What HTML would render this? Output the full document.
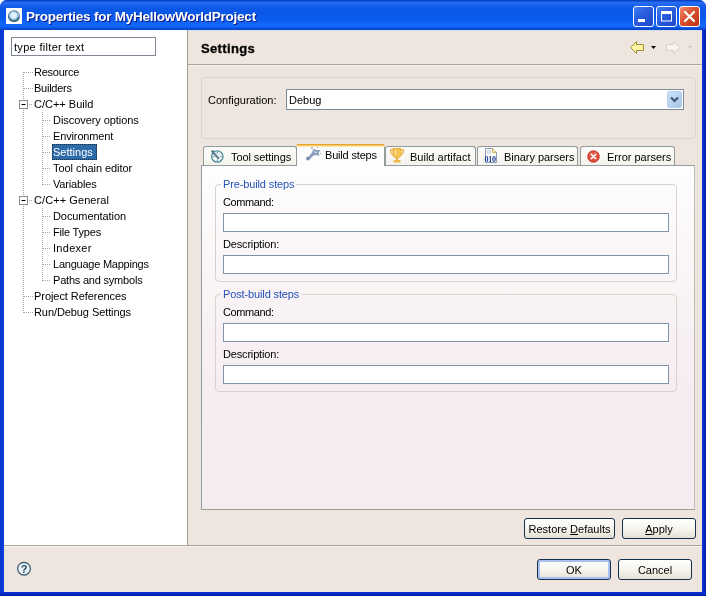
<!DOCTYPE html>
<html>
<head>
<meta charset="utf-8">
<title>Properties for MyHellowWorldProject</title>
<style>
html,body{margin:0;padding:0;background:#fff;}
body{width:706px;height:596px;overflow:hidden;position:relative;font:11px "Liberation Sans",sans-serif;color:#000;}
#win{position:absolute;left:0;top:0;width:706px;height:596px;background:#0a34d6;will-change:transform;border-radius:7px 7px 0 0;overflow:hidden;}
#titlebar{position:absolute;left:0;top:0;width:706px;height:30px;
 background:linear-gradient(to bottom,#0838b4 0%,#0f52dc 4%,#2a6ef2 9%,#1c64ee 16%,#0c58e6 26%,#0a58e8 45%,#0b5cee 65%,#1066f8 80%,#1268fa 88%,#0a52e0 94%,#0840c0 100%);}
#titletext{position:absolute;left:26px;top:9px;font:bold 13.5px "Liberation Sans",sans-serif;letter-spacing:-0.24px;color:#fff;white-space:nowrap;text-shadow:1px 1px 0 #0a1883;}
#appicon{position:absolute;left:6px;top:8px;width:16px;height:16px;}
.tb{position:absolute;top:6px;width:21px;height:21px;box-sizing:border-box;border:1px solid #fff;border-radius:3px;
 background:linear-gradient(135deg,#3f7ff0 0%,#2a5fe0 40%,#1c47c8 100%);}
#bclose{background:linear-gradient(135deg,#ec8c6c 0%,#d9502f 45%,#b93315 100%);}
#client{position:absolute;left:4px;top:30px;width:698px;height:562px;background:#eee6de;box-shadow:inset 0 1px 0 #d6dff0;}
#bl{position:absolute;left:0;top:30px;width:4px;height:566px;background:linear-gradient(to right,#0830c6,#0a3cd8 45%,#0a40dc);}
#br{position:absolute;left:702px;top:30px;width:4px;height:566px;background:linear-gradient(to right,#0a34d6,#0828c4 50%,#001a9c);}
#bb{position:absolute;left:0;top:592px;width:706px;height:4px;background:linear-gradient(to bottom,#0a34d6,#0828c4 50%,#001a9c);}
#tree{position:absolute;left:0;top:0;width:183px;height:515px;background:#fff;}
#vsep{position:absolute;left:183px;top:0;width:1px;height:515px;background:#9d9d92;}
#hsep{position:absolute;left:0;top:515px;width:698px;height:1px;background:#a7a396;}
#hsep2{position:absolute;left:0;top:516px;width:698px;height:1px;background:#fbf8f3;}
#filter{position:absolute;left:7px;top:7px;width:145px;height:19px;box-sizing:border-box;border:1px solid #7e8896;background:#fff;padding:3px 0 0 2px;white-space:nowrap;letter-spacing:0.31px;}
.ti{position:absolute;height:16px;line-height:17px;white-space:nowrap;}
.sel{background:#2d6aa8;color:#fff;padding:0 4px 0 1px;margin-left:-1px;outline:1px dotted #1c2c3c;outline-offset:-1px;}
#hdr{position:absolute;left:197px;top:11px;font:bold 13px "Liberation Sans",sans-serif;letter-spacing:0.35px;-webkit-text-stroke:0.3px #000;}
#hline{position:absolute;left:184px;top:34px;width:514px;height:1px;background:#aaa69a;}
#hline2{position:absolute;left:184px;top:35px;width:514px;height:1px;background:#f8f5ef;}
#cfg{position:absolute;left:197px;top:47px;width:495px;height:62px;box-sizing:border-box;border:1px solid #dad4c8;border-radius:4px;}
#cfglbl{position:absolute;left:204px;top:64px;}
#combo{position:absolute;left:282px;top:59px;width:398px;height:21px;box-sizing:border-box;border:1px solid #7d8c9c;background:#fff;}
#combotxt{position:absolute;left:2px;top:4px;}
#cbtn{position:absolute;right:1px;top:1px;width:15px;height:17px;box-sizing:border-box;border:1px solid #b4d0ee;border-radius:2px;
 background:linear-gradient(135deg,#cfe2f6 0%,#b9d4f0 50%,#a6c6ea 100%);}
.tab{position:absolute;top:116px;height:20px;box-sizing:border-box;border:1px solid #919b9c;border-bottom:none;border-radius:3px 3px 0 0;background:linear-gradient(#fdfdfc,#f4f2ec);white-space:nowrap;}
.tab span{position:absolute;top:4px;}
.tab.on{top:114px;height:22px;background:#fdfdfd;border-top:none;z-index:3;}
.tab.on:before{content:"";position:absolute;left:-1px;right:-1px;top:0;height:3px;background:linear-gradient(#e8a233 0,#e8a233 1px,#fbc85a 1px,#fbc85a 2px,#fde9b8 2px);border-radius:3px 3px 0 0;box-sizing:border-box;}
#pane{position:absolute;left:197px;top:135px;width:494px;height:345px;box-sizing:border-box;border:1px solid #919b9c;border-right-color:#c0beb8;border-bottom-color:#9c9e9a;background:linear-gradient(#fefefe 0%,#faf5f6 30%,#f6edf0 65%,#f5ecef 100%);z-index:2;}
.grp{position:absolute;left:13px;width:462px;height:98px;box-sizing:border-box;border:1px solid #d8d2c8;border-radius:4px;}
.grp b{position:absolute;left:5px;top:-7px;font-weight:normal;color:#2452b8;background:#f7eff0;padding:0 2px;white-space:nowrap;letter-spacing:-0.13px;}
.lbl{position:absolute;left:7px;}
.inp{position:absolute;left:7px;width:446px;height:19px;box-sizing:border-box;border:1px solid #7f95ac;background:#fff;}
.btn{position:absolute;height:21px;box-sizing:border-box;border:1px solid #15304f;border-radius:3px;text-align:center;line-height:21px;
 background:linear-gradient(#ffffff 0%,#f4f2ea 60%,#e3dfd2 100%);}
.btn.def{box-shadow:inset 0 0 0 2px #a9c0ee;}
u{text-decoration:underline;}
</style>
</head>
<body>
<div id="win">
 <div id="titlebar">
  <svg id="appicon" viewBox="0 0 16 16"><defs><radialGradient id="ag" cx="0.47" cy="0.44" r="0.56"><stop offset="0" stop-color="#eefafe"/><stop offset="0.45" stop-color="#d2e8f4"/><stop offset="0.62" stop-color="#86b2c8"/><stop offset="0.8" stop-color="#2f667c"/><stop offset="1" stop-color="#3d758c"/></radialGradient></defs><rect width="16" height="16" fill="#fff"/><circle cx="8" cy="8.200" r="6" fill="url(#ag)"/><path d="M11.500 4.500 A5 5 0 0 1 12.800 9" stroke="#a8c8e6" stroke-width="1.400" fill="none"/></svg>
  <div id="titletext">Properties for MyHellowWorldProject</div>
  <div class="tb" id="bmin" style="left:633px"><svg width="19" height="19" viewBox="0 0 19 19"><rect x="4" y="12" width="7" height="3" fill="#fff"/></svg></div>
  <div class="tb" id="bmax" style="left:656px"><svg width="19" height="19" viewBox="0 0 19 19"><rect x="4.5" y="5" width="10" height="9" fill="none" stroke="#fff" stroke-width="1"/><rect x="4" y="4" width="11" height="3" fill="#fff"/></svg></div>
  <div class="tb" id="bclose" style="left:679px"><svg width="19" height="19" viewBox="0 0 19 19"><path d="M5 5 L14 14 M14 5 L5 14" stroke="#fff" stroke-width="2.2" stroke-linecap="round"/></svg></div>
 </div>
 <div id="bl"></div><div id="br"></div><div id="bb"></div>
 <div id="client">
  <div id="tree">
   <div id="filter">type filter text</div>
   <svg id="treelines" style="position:absolute;left:0;top:0" width="183" height="330"><g stroke="#a4a4a4" stroke-width="1" stroke-dasharray="1 1" fill="none"><path d="M19.5 42 L19.5 283"/><path d="M20 42.5 L29 42.5"/><path d="M20 58.5 L29 58.5"/><path d="M20 266.5 L29 266.5"/><path d="M20 282.5 L29 282.5"/><path d="M25 74.5 L29 74.5"/><path d="M25 170.5 L29 170.5"/><path d="M38.5 82 L38.5 155"/><path d="M38.5 178 L38.5 251"/><path d="M39 90.5 L47 90.5"/><path d="M39 106.5 L47 106.5"/><path d="M39 122.5 L47 122.5"/><path d="M39 138.5 L47 138.5"/><path d="M39 154.5 L47 154.5"/><path d="M39 186.5 L47 186.5"/><path d="M39 202.5 L47 202.5"/><path d="M39 218.5 L47 218.5"/><path d="M39 234.5 L47 234.5"/><path d="M39 250.5 L47 250.5"/><rect x="15.5" y="70.5" width="8" height="8" fill="#fff" stroke="#8e8e8e" stroke-dasharray="none"/><path d="M17.5 74.5 L21.5 74.5" stroke="#000" stroke-dasharray="none"/><rect x="15.5" y="166.5" width="8" height="8" fill="#fff" stroke="#8e8e8e" stroke-dasharray="none"/><path d="M17.5 170.5 L21.5 170.5" stroke="#000" stroke-dasharray="none"/></g></svg>
   <div class="ti" style="left:30px;top:34px;letter-spacing:-0.25px">Resource</div>
   <div class="ti" style="left:30px;top:50px;letter-spacing:-0.25px">Builders</div>
   <div class="ti" style="left:30px;top:66px">C/C++ Build</div>
   <div class="ti" style="left:49px;top:82px;letter-spacing:-0.059px">Discovery options</div>
   <div class="ti" style="left:49px;top:98px;letter-spacing:-0.136px">Environment</div>
   <div class="ti sel" style="left:49px;top:114px">Settings</div>
   <div class="ti" style="left:49px;top:130px;letter-spacing:-0.059px">Tool chain editor</div>
   <div class="ti" style="left:49px;top:146px;letter-spacing:-0.167px">Variables</div>
   <div class="ti" style="left:30px;top:162px;letter-spacing:0.077px">C/C++ General</div>
   <div class="ti" style="left:49px;top:178px;letter-spacing:-0.077px">Documentation</div>
   <div class="ti" style="left:49px;top:194px;letter-spacing:-0.2px">File Types</div>
   <div class="ti" style="left:49px;top:210px;letter-spacing:0.286px">Indexer</div>
   <div class="ti" style="left:49px;top:226px;letter-spacing:-0.235px">Language Mappings</div>
   <div class="ti" style="left:49px;top:242px;letter-spacing:-0.206px">Paths and symbols</div>
   <div class="ti" style="left:30px;top:258px;letter-spacing:-0.056px">Project References</div>
   <div class="ti" style="left:30px;top:274px;letter-spacing:-0.083px">Run/Debug Settings</div>
  </div>
  <div id="vsep"></div><div id="hsep"></div><div id="hsep2"></div>
  <div id="hdr">Settings</div>
  <svg id="nav" style="position:absolute;left:622px;top:8px" width="76" height="20" viewBox="0 0 76 20">
   <path d="M4.5 9.5 L10.5 3.5 L10.5 6.5 L17.5 6.5 L17.5 12.5 L10.5 12.5 L10.5 15.5 Z" fill="#fcf3a4" stroke="#a09038" stroke-width="1" stroke-linejoin="round"/>
   <path d="M25 8 L30 8 L27.5 11 Z" fill="#000"/>
   <path d="M53.500 9.5 L47.5 3.5 L47.5 6.5 L40.5 6.500 L40.5 12.5 L47.5 12.5 L47.5 15.5 Z" fill="#f7f4ee" stroke="#d6d1c6" stroke-width="1" stroke-linejoin="round"/>
   <path d="M62 8 L66 8 L64 10.500 Z" fill="#c9c5bb"/>
  </svg>
  <div id="hline"></div><div id="hline2"></div>
  <div id="cfg"></div>
  <div id="cfglbl">Configuration:</div>
  <div id="combo"><div id="combotxt">Debug</div><div id="cbtn"><svg style="position:absolute;left:0;top:0" width="13" height="15" viewBox="0 0 13 15"><path d="M3 5.500 L6.500 9 L10 5.500" fill="none" stroke="#42566f" stroke-width="2.200"/></svg></div></div>

  <div class="tab" style="left:199px;width:94px"><svg style="position:absolute;left:5px;top:1px" width="16" height="16" viewBox="0 0 16 16"><circle cx="8.300" cy="8.500" r="5.700" fill="#f2f7f8" stroke="#4e8c98" stroke-width="1.300"/><path d="M8.300 4 V5.500 M12.800 8.500 H11.300 M8.300 13 V11.500 M3.800 8.500 H5.300" stroke="#4e8c98" stroke-width="1"/><path d="M3.500 3.200 L9.300 10" stroke="#4f6f80" stroke-width="2.300" stroke-linecap="round"/><path d="M5 4 L9.500 9.500" stroke="#bcd0d8" stroke-width="0.800"/></svg><span style="left:27px;letter-spacing:-0.08px">Tool settings</span></div>
  <div class="tab on" style="left:292px;width:89px"><svg style="position:absolute;left:8px;top:2px" width="17" height="15" viewBox="0 0 17 15"><circle cx="3" cy="12.500" r="2" fill="#7f90ae"/><path d="M3.300 11.300 L7 6.500 L8.500 2.800 L11 4 L15.500 4 L13.500 6.800 L14.500 9.800 L10.500 9 L8 10 L4.800 13.200 Z" fill="#8c9cba"/><circle cx="7" cy="2" r="0.900" fill="#94a4c0"/><circle cx="15.800" cy="7.500" r="0.800" fill="#aab8d0"/><circle cx="12.500" cy="1.800" r="0.700" fill="#b4c0d4"/><path d="M9 5.500 L12 7" stroke="#c8d4e8" stroke-width="1.200"/></svg><span style="left:28px;top:5px;letter-spacing:-0.18px">Build steps</span></div>
  <div class="tab" style="left:381px;width:91px"><svg style="position:absolute;left:3px;top:1px" width="16" height="15" viewBox="0 0 16 15"><path d="M4 0.500 H12 V6 C12 9 10 10 8 10 C6 10 4 9 4 6 Z" fill="#f6c655" stroke="#e3a22b" stroke-width="0.800"/><path d="M4 2 H1.500 C1.500 5 2.500 6.500 4.500 6.500 M12 2 H14.500 C14.500 5 13.500 6.500 11.500 6.500" fill="none" stroke="#eab040" stroke-width="1.300"/><rect x="7" y="10" width="2" height="2" fill="#eab040"/><rect x="4.500" y="12" width="7" height="2.500" rx="0.500" fill="#f0b848"/><path d="M6.500 2 V7" stroke="#fde9a8" stroke-width="1.200"/></svg><span style="left:24px">Build artifact</span></div>
  <div class="tab" style="left:473px;width:101px"><svg style="position:absolute;left:6px;top:1px" width="15" height="16" viewBox="0 0 15 16"><path d="M1.500 0.500 H8.500 L12.500 4.500 V14.500 H1.500 Z" fill="#fffef4" stroke="#8c9cb4" stroke-width="1"/><path d="M8.500 0.500 V4.500 H12.500" fill="#f4e4a0" stroke="#c8a848" stroke-width="0.800"/><path d="M3 3 H7 M3 5 H7" stroke="#9ab4d8" stroke-width="0.800"/><text x="0.500" y="13.500" font-family="Liberation Serif" font-weight="bold" font-size="8" fill="#1a3a9c" letter-spacing="-0.300">010</text></svg><span style="left:26px;letter-spacing:-0.04px">Binary parsers</span></div>
  <div class="tab" style="left:576px;width:95px"><svg style="position:absolute;left:6px;top:3px" width="13" height="13" viewBox="0 0 13 13"><circle cx="6.500" cy="6.500" r="5.800" fill="#dc4a3c" stroke="#b8281c" stroke-width="0.800"/><circle cx="6.500" cy="5.500" r="4" fill="#e8685a" opacity="0.600"/><path d="M4.200 4.200 L8.800 8.800 M8.800 4.200 L4.200 8.800" stroke="#fff" stroke-width="1.400" stroke-linecap="round"/></svg><span style="left:26px">Error parsers</span></div>
  <div id="pane">
   <div class="grp" style="top:18px"><b style="background:#fdfcfc">Pre-build steps</b>
     <div class="lbl" style="top:11px;letter-spacing:-0.4px">Command:</div><div class="inp" style="top:28px"></div>
     <div class="lbl" style="top:53px;letter-spacing:-0.17px">Description:</div><div class="inp" style="top:70px"></div>
   </div>
   <div class="grp" style="top:128px"><b style="background:#f9f3f5">Post-build steps</b>
     <div class="lbl" style="top:11px;letter-spacing:-0.4px">Command:</div><div class="inp" style="top:28px"></div>
     <div class="lbl" style="top:53px;letter-spacing:-0.17px">Description:</div><div class="inp" style="top:70px"></div>
   </div>
  </div>

  <div class="btn" style="left:520px;top:488px;width:91px">Restore <u>D</u>efaults</div>
  <div class="btn" style="left:618px;top:488px;width:74px"><u>A</u>pply</div>
  <div class="btn def" style="left:533px;top:529px;width:74px">OK</div>
  <div class="btn" style="left:614px;top:529px;width:74px">Cancel</div>
  <svg style="position:absolute;left:12px;top:531px" width="16" height="16" viewBox="0 0 16 16"><circle cx="8" cy="7.700" r="6.400" fill="#e8f3f9" stroke="#35546c" stroke-width="1.200"/><text x="8" y="11.700" text-anchor="middle" font-family="Liberation Sans" font-weight="bold" font-size="11" fill="#2c465c">?</text></svg>
 </div>
</div>
</body>
</html>
